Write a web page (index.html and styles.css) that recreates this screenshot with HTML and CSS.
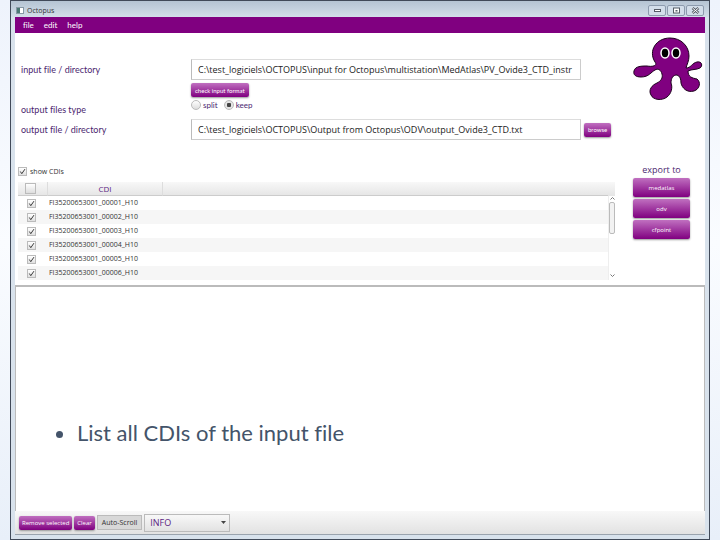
FILE: index.html
```html
<!DOCTYPE html>
<html lang="en">
<head>
    <meta charset="UTF-8">
    <meta name="viewport" content="width=device-width, initial-scale=1.0">
    <title>Octopus</title>
    <link rel="stylesheet" href="styles.css">
</head>
<body>
    <div class="window">
        <header class="titlebar">
            <span class="app-icon"></span>
            <span class="title">Octopus</span>
            <div class="window-buttons">
                <button type="button" aria-label="Minimize">
                    <svg width="9" height="7" viewBox="0 0 9 7"><rect x="1.5" y="2.5" width="6" height="2" fill="#fff" stroke="#555c66"/></svg>
                </button>
                <button type="button" aria-label="Maximize">
                    <svg width="9" height="7" viewBox="0 0 9 7"><rect x="1.5" y="1" width="6" height="5" fill="#fff" stroke="#555c66"/><rect x="3.5" y="3" width="2" height="1.5" fill="#555c66"/></svg>
                </button>
                <button type="button" aria-label="Close">
                    <svg width="9" height="7" viewBox="0 0 9 7"><path d="M1.5 1L7.5 6M7.5 1L1.5 6" stroke="#555c66" stroke-width="2.6"/><path d="M1.5 1L7.5 6M7.5 1L1.5 6" stroke="#fff"/></svg>
                </button>
            </div>
        </header>

        <div class="client">
            <nav class="menu">
                <a href="#">file</a>
                <a href="#">edit</a>
                <a href="#">help</a>
            </nav>

            <!-- Input and output settings -->
            <div class="settings">
                <form class="form">
                    <label for="input">input file / directory</label>
                    <input class="path" id="input" type="text" value="C:\test_logiciels\OCTOPUS\input for Octopus\multistation\MedAtlas\PV_Ovide3_CTD_instr">
                    <div class="check-row">
                        <button type="button" class="btn">check input format</button>
                    </div>
                    <span class="type-label" id="typeLabel">output files type</span>
                    <div class="radios" role="radiogroup" aria-labelledby="typeLabel">
                        <label><input type="radio" name="type">split</label>
                        <label><input type="radio" name="type" checked>keep</label>
                    </div>
                    <label for="output">output file / directory</label>
                    <input class="path" id="output" type="text" value="C:\test_logiciels\OCTOPUS\Output from Octopus\ODV\output_Ovide3_CTD.txt">
                    <button type="button" class="btn">browse</button>
                </form>
                <svg class="octopus" width="70" height="64" viewBox="0 0 70 64">
                    <path d="M37 1C48 1 56 9 56 19C56 24 54 27 53 31C58 31 59 26 64 25C69 24 70 29 67 31C63 33 59 32 55 34C55 40 59 41 64 42C68 45 67 52 61 54C54 56 49 51 48 46C48 42 47 39 44 38C40 38 38 41 38 46C40 51 38 57 34 60C29 64 20 63 18 58C15 53 19 48 24 46C28 44 30 41 29 37C28 33 25 31 22 33C18 35 16 40 8 40C3 40 0 38 1 34C2 29 9 29 14 29C19 30 25 29 22 25C15 14 23 1 37 1Z" fill="#800080" stroke="#1c001c"/>
                    <ellipse cx="32" cy="16" rx="4" ry="5" stroke="#fff" stroke-width="1.5"/>
                    <ellipse cx="43" cy="16" rx="4" ry="5" stroke="#fff" stroke-width="1.5"/>
                </svg>
            </div>

            <!-- CDI list and export -->
            <div class="cdi-area">
                <div class="cdi-list">
                    <label class="show"><input type="checkbox" checked>show CDIs</label>
                    <div class="table-box">
                        <table>
                            <thead>
                                <tr>
                                    <th class="tick"><input type="checkbox" aria-label="Select all"></th>
                                    <th class="name">CDI</th>
                                    <th></th>
                                </tr>
                            </thead>
                            <tbody>
                                <tr><td class="tick"><input type="checkbox" id="c1" checked></td><td colspan="2"><label for="c1">FI35200653001_00001_H10</label></td></tr>
                                <tr><td class="tick"><input type="checkbox" id="c2" checked></td><td colspan="2"><label for="c2">FI35200653001_00002_H10</label></td></tr>
                                <tr><td class="tick"><input type="checkbox" id="c3" checked></td><td colspan="2"><label for="c3">FI35200653001_00003_H10</label></td></tr>
                                <tr><td class="tick"><input type="checkbox" id="c4" checked></td><td colspan="2"><label for="c4">FI35200653001_00004_H10</label></td></tr>
                                <tr><td class="tick"><input type="checkbox" id="c5" checked></td><td colspan="2"><label for="c5">FI35200653001_00005_H10</label></td></tr>
                                <tr><td class="tick"><input type="checkbox" id="c6" checked></td><td colspan="2"><label for="c6">FI35200653001_00006_H10</label></td></tr>
                            </tbody>
                        </table>
                        <div class="scroll">
                            <svg width="5" height="3" viewBox="0 0 5 3"><path d="M0.5 2.5L2.5 0.5L4.5 2.5" fill="none" stroke="#777"/></svg>
                            <span class="thumb"></span>
                            <svg width="5" height="3" viewBox="0 0 5 3"><path d="M0.5 0.5L2.5 2.5L4.5 0.5" fill="none" stroke="#777"/></svg>
                        </div>
                    </div>
                </div>
                <div class="export">
                    <span class="export-title">export to</span>
                    <button type="button" class="btn">medatlas</button>
                    <button type="button" class="btn">odv</button>
                    <button type="button" class="btn">cfpoint</button>
                </div>
            </div>

            <main class="log">
                <ul>
                    <li>List all CDIs of the input file</li>
                </ul>
            </main>

            <footer class="toolbar">
                <button type="button" class="btn">Remove selected</button>
                <button type="button" class="btn">Clear</button>
                <button type="button" class="toggle" aria-pressed="true">Auto-Scroll</button>
                <select class="level" aria-label="Log level">
                    <option>INFO</option>
                </select>
            </footer>
        </div>
    </div>
</body>
</html>
```

FILE: styles.css
```css
* {
    box-sizing: border-box;
}
body {
    margin: 0;
    background: linear-gradient(#eef3fc, #fafcff 45%, #e8eff9);
    font-family: "Open Sans", "Noto Sans", sans-serif;
    font-size: 7px;
    font-variant-ligatures: none;
    color: #333;
}
button, input, select {
    font-family: inherit;
    margin: 0;
}
.window {
    display: flex;
    flex-direction: column;
    min-height: 100vh;
    margin: 0 10px;
    padding: 0 4px 4px;
    border: 1px solid #414a59;
    background: #d8e2ec;
}
.titlebar {
    display: flex;
    align-items: center;
    gap: 3px;
    height: 16px;
    margin: 0 -4px;
    padding: 3px 5px 0;
    background: linear-gradient(#b5c4d3, #d3dee9);
}
.app-icon {
    width: 8px;
    height: 7px;
    border: 1px solid #d9efe9;
    border-right: 4px solid #fff;
    background: #4a7873;
    outline: 1px solid #8798a5;
    outline-offset: -1px;
}
.window-buttons {
    display: flex;
    gap: 1px;
    margin-left: auto;
}
.window-buttons button {
    display: flex;
    align-items: center;
    justify-content: center;
    width: 18px;
    height: 11px;
    padding: 0;
    border: 1px solid #8d9bae;
    border-radius: 2px;
    background: #d3deea;
}
.client {
    display: flex;
    flex-direction: column;
    flex: 1;
    background: #fff;
    border-bottom: 1px solid #9aa3ad;
}
.menu {
    display: flex;
    align-items: center;
    gap: 10px;
    height: 16px;
    padding: 0 8px;
    background: #800080;
    font-family: Lato, sans-serif;
    font-size: 8px;
}
.menu a {
    color: #fff;
    text-decoration: none;
}
.settings {
    display: flex;
    justify-content: space-between;
    padding: 4px 2px 0 6px;
}
.form {
    display: grid;
    grid-template-columns: 170px 1fr 52px;
    grid-template-rows: 21px 20px 19px 21px;
    align-items: center;
    flex: 1;
    margin-top: 22px;
    color: #4b1f6f;
    font-family: Lato, sans-serif;
    font-size: 9px;
}
.path {
    width: 100%;
    height: 21px;
    padding: 0 6px;
    border: 1px solid #ccc;
    border-top-color: #ddd;
    border-left-color: #bbb;
    font-family: "Open Sans", "Noto Sans", sans-serif;
    font-size: 9px;
    color: #222;
}
.check-row, .radios {
    grid-column: 2 / 4;
}
.check-row {
    display: flex;
}
.type-label {
    grid-row: 3;
}
.radios {
    display: flex;
    align-self: start;
    gap: 6px;
    font-size: 8px;
}
.radios label, .show {
    display: flex;
    align-items: center;
    gap: 2px;
}
.form .btn {
    height: 14px;
    justify-self: start;
}
.form > .btn {
    margin-left: 3px;
}
.btn {
    padding: 0 4px;
    border: 0;
    border-radius: 2px;
    background: linear-gradient(#c070c0, #800080);
    box-shadow: 0 1px 2px #999;
    color: #fff;
    font-size: 6px;
}
input[type="radio"], input[type="checkbox"] {
    appearance: none;
    width: 9px;
    height: 9px;
    border: 1px solid #bbb;
    background: linear-gradient(#fff, #ddd);
}
input[type="radio"] {
    width: 10px;
    height: 10px;
    border-radius: 50%;
}
input[type="radio"]:checked {
    background: radial-gradient(circle, #444 35%, #e4e4e4 45%);
}
input[type="checkbox"]:checked {
    background: url("data:image/svg+xml,%3Csvg xmlns='http://www.w3.org/2000/svg' viewBox='0 0 8 8'%3E%3Cpath d='M1.5 4L3.2 6.5L6.8 1.3' fill='none' stroke='%23333' stroke-width='1.1'/%3E%3C/svg%3E") center / 100%, linear-gradient(#fff, #e0e0e0);
}
.octopus {
    flex-shrink: 0;
}
.cdi-area {
    display: flex;
    gap: 18px;
    padding: 24px 15px 0 3px;
}
.cdi-list {
    flex: 1;
}
.show {
    height: 14px;
    gap: 3px;
    margin-bottom: 4px;
}
.table-box {
    display: flex;
    background: linear-gradient(#f8f8f8, #e5e5e5) top / 100% 14px no-repeat;
}
table {
    flex: 1;
    table-layout: fixed;
    border-spacing: 0;
}
th, td {
    height: 14px;
    padding: 0 2px;
    line-height: 12px;
    text-align: left;
}
td {
    padding: 0 1px;
}
th {
    border-right: 1px solid #ddd;
    border-bottom: 1px solid #ccc;
    color: #5b2482;
    font-size: 8px;
    font-weight: normal;
}
th:last-child {
    border-right: 0;
}
tbody tr:nth-child(even) {
    background: #f6f6f6;
}
.tick {
    width: 30px;
    padding: 0 4px 0 0;
}
.tick input {
    display: block;
    margin: 0 auto;
}
th.tick input {
    width: 11px;
    height: 11px;
}
.name {
    width: 115px;
    text-align: center;
}
.scroll {
    display: flex;
    flex-direction: column;
    align-items: center;
    width: 7px;
    margin-top: 14px;
    padding: 1px 0 3px;
    border-left: 1px solid #eee;
}
.thumb {
    width: 6px;
    height: 32px;
    margin: 2px 0 auto;
    border: 1px solid #bbb;
    border-radius: 2px;
    background: #f2f2f2;
}
.export {
    display: flex;
    flex-direction: column;
    gap: 2px;
    width: 57px;
}
.export-title {
    height: 12px;
    font-size: 9px;
    line-height: 12px;
    text-align: center;
    color: #4b1f6f;
}
.export .btn {
    height: 19px;
}
.log {
    flex: 1;
    margin-top: 5px;
    padding-top: 132px;
    border: 1px solid #bbb;
    border-top-width: 2px;
    border-bottom: 0;
}
.log ul {
    margin: 0;
    padding-left: 61px;
    color: #44546a;
    font-family: Lato, sans-serif;
    font-size: 22px;
    line-height: 28px;
}
.toolbar {
    display: flex;
    align-items: center;
    gap: 2px;
    height: 23px;
    padding: 0 4px;
    background: linear-gradient(#f8f8f8, #e2e2e2);
}
.toolbar .btn {
    height: 14px;
    padding: 0 3px;
}
.toggle {
    height: 15px;
    padding: 0 4px;
    border: 1px solid #bbb;
    background: #d8d8d8;
    color: #333;
    font-size: 7px;
}
.level {
    appearance: none;
    width: 86px;
    height: 18px;
    padding: 0 5px;
    border: 1px solid #bbb;
    background: url("data:image/svg+xml,%3Csvg xmlns='http://www.w3.org/2000/svg' viewBox='0 0 5 3'%3E%3Cpath d='M0 0H5L2.5 3Z' fill='%23444'/%3E%3C/svg%3E") right 3px center / 5px 3px no-repeat, linear-gradient(#f8f8f8, #e2e2e2);
    color: #5b2482;
    font-size: 9px;
}
```
